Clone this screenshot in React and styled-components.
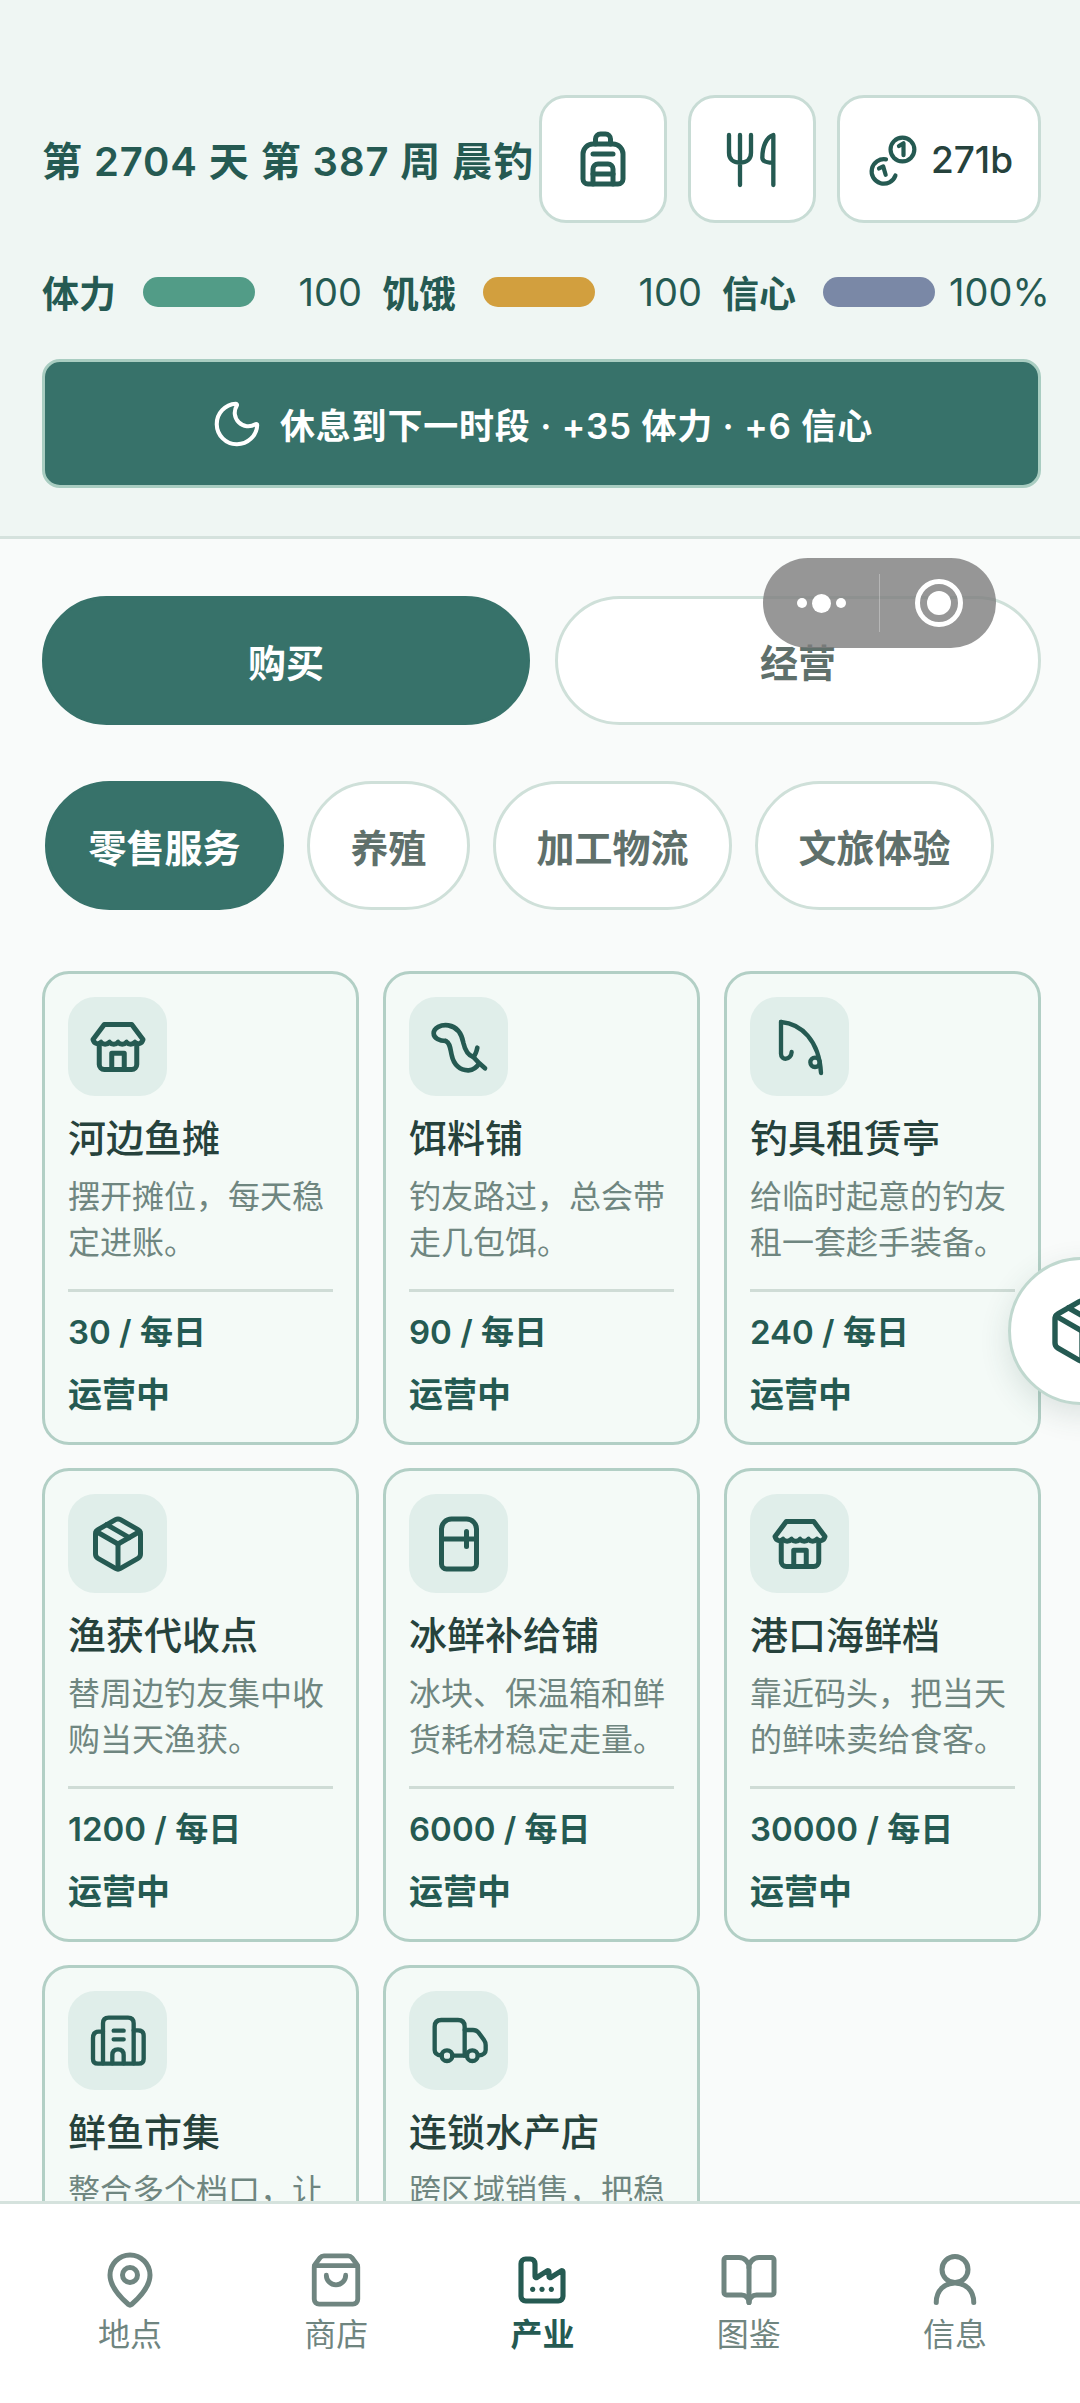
import React from "react";
import styled, { createGlobalStyle } from "styled-components";
import { Backpack, Moon, Package, Refrigerator, MapPin, ShoppingBag, Factory, BookOpen } from "lucide-react";

const Global = createGlobalStyle`
  html, body { margin: 0; padding: 0; background: #f9fbfa; }
  * { box-sizing: border-box; }
  body { font-family: "Inter", "Noto Sans CJK SC", "Noto Sans", sans-serif; }
`;

const DARK = "#255a52";
const TEAL = "#37726a";

const Page = styled.div`
  position: relative;
  width: 1080px;
  height: 2403px;
  display: flex;
  flex-direction: column;
  overflow: hidden;
`;
const Header = styled.header`
  flex: none;
  background: #eff6f3;
  padding: 95px 39px 48px 42px;
  border-bottom: 3px solid #d5e2dd;
`;
const TopRow = styled.div`
  display: flex;
  align-items: center;
  justify-content: space-between;
`;
const DayText = styled.div`
  font-size: 40px;
  letter-spacing: 0.9px;
  font-weight: 600;
  color: ${DARK};
  white-space: nowrap;
  min-width: 0;
`;
const Tools = styled.div`
  flex: none;
  display: flex;
  gap: 21px;
`;
const ToolButton = styled.div`
  width: ${(p) => (p.$wide ? "204px" : "128px")};
  height: 128px;
  background: #fff;
  border: 3px solid #c8dcd5;
  border-radius: 27px;
  display: flex;
  align-items: center;
  justify-content: center;
  gap: 10px;
  color: ${DARK};
  svg { flex: none; }
`;
const Money = styled.span`
  font-size: 37px;
  font-weight: 500;
  color: #26423c;
`;
const Stats = styled.div`
  display: flex;
  gap: 20px;
  margin-top: 44px;
  height: 50px;
`;
const Stat = styled.div`
  flex: 0 0 320px;
  display: flex;
  align-items: center;
  white-space: nowrap;
  color: ${DARK};
`;
const StatLabel = styled.span`
  font-size: 37px;
  font-weight: 600;
  margin-right: 27px;
`;
const Bar = styled.span`
  flex: none;
  width: 112px;
  height: 30px;
  border-radius: 15px;
  background: ${(p) => p.$color};
`;
const StatValue = styled.span`
  margin-left: auto;
  padding-left: 14px;
  font-size: 38px;
  font-weight: 400;
`;
const RestButton = styled.div`
  margin-top: 42px;
  height: 129px;
  background: ${TEAL};
  border: 3px solid #a9cdc1;
  border-radius: 18px;
  display: flex;
  align-items: center;
  justify-content: center;
  gap: 16px;
  color: #fff;
  font-size: 35px;
  letter-spacing: 0.8px;
  font-weight: 600;
`;
const Main = styled.main`
  flex: 1;
  min-height: 0;
  overflow: hidden;
  background: #f9fbfa;
  padding: 57px 39px 0 42px;
`;
const Segments = styled.div`
  display: grid;
  grid-template-columns: 488px 1fr;
  gap: 25px;
`;
const Segment = styled.div`
  height: 129px;
  border-radius: 65px;
  display: flex;
  align-items: center;
  justify-content: center;
  font-size: 38px;
  font-weight: 600;
  background: ${(p) => (p.$active ? TEAL : "#fff")};
  color: ${(p) => (p.$active ? "#fff" : "#5f706b")};
  border: 3px solid ${(p) => (p.$active ? TEAL : "#cfe0d9")};
`;
const Chips = styled.div`
  display: flex;
  gap: 23px;
  margin: 56px 0 61px 3px;
`;
const Chip = styled.div`
  height: 129px;
  padding: 0 40.5px;
  border-radius: 65px;
  display: flex;
  align-items: center;
  font-size: 38px;
  font-weight: 600;
  background: ${(p) => (p.$active ? TEAL : "#fff")};
  color: ${(p) => (p.$active ? "#fff" : "#5f706b")};
  border: 3px solid ${(p) => (p.$active ? TEAL : "#cfe0d9")};
`;
const CardGrid = styled.div`
  display: grid;
  grid-template-columns: repeat(3, 1fr);
  grid-auto-rows: 474px;
  gap: 23px 24px;
`;
const Card = styled.article`
  background: #f4faf7;
  border: 3px solid #b2cfc5;
  border-radius: 27px;
  padding: 23px 23px 0;
  overflow: hidden;
`;
const IconBox = styled.div`
  width: 99px;
  height: 99px;
  border-radius: 27px;
  background: #e0eeea;
  display: flex;
  align-items: center;
  justify-content: center;
  color: ${DARK};
`;
const CardTitle = styled.h3`
  margin: 17px 0 0;
  font-size: 38px;
  line-height: 50px;
  font-weight: 500;
  color: #26423c;
`;
const CardDesc = styled.p`
  margin: 11px 0 0;
  font-size: 32px;
  line-height: 46px;
  height: 92px;
  color: #6f8680;
`;
const CardRule = styled.hr`
  margin: 23px 0 17px;
  border: 0;
  height: 3px;
  background: #cfdcd6;
`;
const CardMeta = styled.div`
  font-size: ${(p) => (p.$status ? "34px" : "33px")};
  line-height: 46px;
  font-weight: 600;
  color: ${DARK};
  margin-top: ${(p) => (p.$status ? "17px" : "0")};
`;
const Nav = styled.nav`
  flex: none;
  height: 202px;
  background: #fff;
  border-top: 3px solid #d5e2dd;
  padding: 46px 22px 0 27px;
  display: grid;
  grid-template-columns: repeat(5, 1fr);
`;
const NavItem = styled.div`
  display: flex;
  flex-direction: column;
  align-items: center;
  gap: 3px;
  font-size: 32px;
  line-height: 44px;
  font-weight: ${(p) => (p.$active ? 700 : 400)};
  color: ${(p) => (p.$active ? DARK : "#6f8580")};
`;
const NavIcon = styled.div`
  width: 60px;
  height: 60px;
  display: flex;
  align-items: center;
  justify-content: center;
`;
const Capsule = styled.div`
  position: absolute;
  left: 763px;
  top: 558px;
  width: 233px;
  height: 90px;
  border-radius: 45px;
  background: rgba(125, 125, 125, 0.8);
  display: flex;
  align-items: center;
`;
const CapsuleDots = styled.div`
  width: 116px;
  display: flex;
  align-items: center;
  justify-content: center;
  gap: 5px;
`;
const CapsuleDot = styled.span`
  width: ${(p) => p.$size}px;
  height: ${(p) => p.$size}px;
  border-radius: 50%;
  background: #fff;
`;
const CapsuleRule = styled.span`
  width: 1px;
  height: 58px;
  background: rgba(255, 255, 255, 0.3);
`;
const CapsuleRing = styled.span`
  margin-left: 35px;
  width: 48px;
  height: 48px;
  border-radius: 50%;
  border: 5px solid #fff;
  display: flex;
  align-items: center;
  justify-content: center;
  &::after {
    content: "";
    width: 24px;
    height: 24px;
    border-radius: 50%;
    background: #fff;
  }
`;
const FloatButton = styled.div`
  position: absolute;
  left: 1008px;
  top: 1257px;
  width: 148px;
  height: 148px;
  border-radius: 50%;
  background: #fff;
  border: 3px solid #c0d8cf;
  box-shadow: 0 10px 30px rgba(40, 80, 70, 0.14);
  display: flex;
  align-items: center;
  justify-content: center;
  color: ${DARK};
`;

const Svg = ({ box, size = 60, sw = 13, children }) => (
  <svg width={size} height={size} viewBox={box} fill="none" stroke="currentColor" strokeWidth={sw} strokeLinecap="round" strokeLinejoin="round">
    {children}
  </svg>
);

const Utensils = () => (
  <Svg box="486 54 180 180">
    <path d="M507 72V125C507 145 520 155 540 155C560 155 573 145 573 125V72M540 72V222" />
    <path d="M640 222V72C620 78 607 105 607 140C607 150 615 155 640 155" />
  </Svg>
);
const Coins = () => (
  <Svg box="915 65 160 160" sw={12} size={56}>
    <circle cx="1022" cy="118" r="34" />
    <path d="M1012 108L1025 100V134" />
    <path d="M975 146A35 35 0 1 0 1002 192" />
    <path d="M955 172L967 166L974 190" />
  </Svg>
);
const Store = () => (
  <Svg box="0 0 24 24" sw={2}>
    <path d="M6.500 3h11L22 9c-.5 1.700-2 2.200-3.200 1.100-.9 1-2.600 1-3.400 0-.8 1-2.600 1-3.400 0-.8 1-2.600 1-3.400 0-.9 1-2.600 1-3.400 0C4 11.200 2.500 10.700 2 9z" />
    <path d="M4.500 11v8a2 2 0 0 0 2 2h11a2 2 0 0 0 2-2v-8" />
    <path d="M9.500 21v-6.500h5V21" />
  </Svg>
);
const Worm = () => (
  <Svg box="54 48 180 180" sw={14}>
    <path d="M104 120C86 120 68 112 68 97C68 80 90 70 112 73C140 78 152 98 157 125C162 147 172 163 187 168C193 162 197 150 199 140" />
    <path d="M104 120C118 125 118 147 122 162C128 192 148 209 173 208C190 207 200 195 205 187L222 202M187 168L205 187" />
  </Svg>
);
const Rod = () => (
  <Svg box="207 170 180 180">
    <path d="M240 185C300 190 355 240 360 338" />
    <path d="M240 185V280C240 302 270 300 272 275" />
    <circle cx="342" cy="306" r="14" />
  </Svg>
);
const Building = () => (
  <Svg box="80 78 180 180">
    <path d="M125 235V115Q125 98 142 98H200Q217 98 217 115V235" />
    <path d="M125 140H112Q95 140 95 160V222Q95 236 110 236H232Q247 236 247 222V152Q247 136 230 136H217" />
    <path d="M157 137H187M157 163H187" />
    <path d="M153 235V210Q153 193 170 193Q187 193 187 210V235" />
  </Svg>
);
const Truck = () => (
  <Svg box="1103 78 180 180">
    <path d="M1141 212Q1120 210 1120 195V125Q1120 105 1140 105H1190Q1210 105 1210 125V212" />
    <path d="M1210 135H1235Q1245 135 1252 143L1268 165Q1273 172 1273 180V195Q1273 210 1250 212" />
    <path d="M1173 212H1217" />
    <circle cx="1157" cy="212" r="16" />
    <circle cx="1233" cy="212" r="16" />
  </Svg>
);
const UserIcon = () => (
  <Svg box="0 0 24 24" sw={2}>
    <circle cx="12" cy="7.800" r="5.200" />
    <path d="M4.500 21C4.500 16 8 13.200 12 13.200S19.500 16 19.500 21" />
  </Svg>
);

const cards = [
  { icon: <Store />, title: "河边鱼摊", desc: "摆开摊位，每天稳定进账。", income: "30 / 每日" },
  { icon: <Worm />, title: "饵料铺", desc: "钓友路过，总会带走几包饵。", income: "90 / 每日" },
  { icon: <Rod />, title: "钓具租赁亭", desc: "给临时起意的钓友租一套趁手装备。", income: "240 / 每日" },
  { icon: <Package size={60} strokeWidth={2} />, title: "渔获代收点", desc: "替周边钓友集中收购当天渔获。", income: "1200 / 每日" },
  { icon: <Refrigerator size={60} strokeWidth={2} />, title: "冰鲜补给铺", desc: "冰块、保温箱和鲜货耗材稳定走量。", income: "6000 / 每日" },
  { icon: <Store />, title: "港口海鲜档", desc: "靠近码头，把当天的鲜味卖给食客。", income: "30000 / 每日" },
  { icon: <Building />, title: "鲜鱼市集", desc: "整合多个档口，让" },
  { icon: <Truck />, title: "连锁水产店", desc: "跨区域销售，把稳" },
];

const stats = [
  { label: "体力", color: "#529c87", value: "100" },
  { label: "饥饿", color: "#d29f3e", value: "100" },
  { label: "信心", color: "#7a88a6", value: "100%" },
];

const navItems = [
  { label: "地点", icon: <MapPin size={60} strokeWidth={2} /> },
  { label: "商店", icon: <ShoppingBag size={58} strokeWidth={2} /> },
  { label: "产业", icon: <Factory size={56} strokeWidth={2.2} />, active: true },
  { label: "图鉴", icon: <BookOpen size={60} strokeWidth={2} /> },
  { label: "信息", icon: <UserIcon /> },
];

export default function App() {
  return (
    <Page>
      <Global />
      <Header>
        <TopRow>
          <DayText>第 2704 天 第 387 周 晨钓</DayText>
          <Tools>
            <ToolButton><Backpack size={60} strokeWidth={2} /></ToolButton>
            <ToolButton><Utensils /></ToolButton>
            <ToolButton $wide><Coins /><Money>271b</Money></ToolButton>
          </Tools>
        </TopRow>
        <Stats>
          {stats.map((s) => (
            <Stat key={s.label}>
              <StatLabel>{s.label}</StatLabel>
              <Bar $color={s.color} />
              <StatValue>{s.value}</StatValue>
            </Stat>
          ))}
        </Stats>
        <RestButton>
          <Moon size={54} strokeWidth={1.8} />
          休息到下一时段 · +35 体力 · +6 信心
        </RestButton>
      </Header>
      <Main>
        <Segments>
          <Segment $active>购买</Segment>
          <Segment>经营</Segment>
        </Segments>
        <Chips>
          <Chip $active>零售服务</Chip>
          <Chip>养殖</Chip>
          <Chip>加工物流</Chip>
          <Chip>文旅体验</Chip>
        </Chips>
        <CardGrid>
          {cards.map((c) => (
            <Card key={c.title}>
              <IconBox>{c.icon}</IconBox>
              <CardTitle>{c.title}</CardTitle>
              <CardDesc>{c.desc}</CardDesc>
              {c.income && (
                <>
                  <CardRule />
                  <CardMeta>{c.income}</CardMeta>
                  <CardMeta $status>运营中</CardMeta>
                </>
              )}
            </Card>
          ))}
        </CardGrid>
      </Main>
      <Nav>
        {navItems.map((n) => (
          <NavItem key={n.label} $active={n.active}>
            <NavIcon>{n.icon}</NavIcon>
            {n.label}
          </NavItem>
        ))}
      </Nav>
      <Capsule>
        <CapsuleDots>
          <CapsuleDot $size={10} />
          <CapsuleDot $size={19} />
          <CapsuleDot $size={10} />
        </CapsuleDots>
        <CapsuleRule />
        <CapsuleRing />
      </Capsule>
      <FloatButton><Package size={72} strokeWidth={1.8} /></FloatButton>
    </Page>
  );
}
